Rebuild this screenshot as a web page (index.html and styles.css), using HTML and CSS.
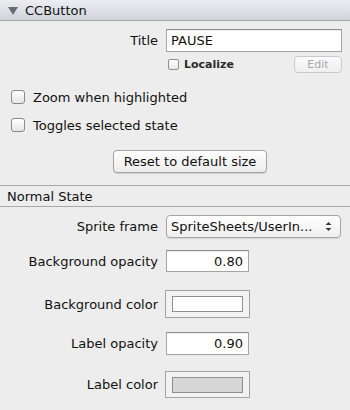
FILE: index.html
```html
<!DOCTYPE html>
<html lang="en">

<head>
  <meta charset="UTF-8" />
  <title>CCButton Inspector</title>
  <link rel="stylesheet" href="styles.css">
</head>

<body>
  <div class="inspector">

    <div class="panel-header">
      <span class="disclosure"></span>
      <span class="panel-title">CCButton</span>
    </div>

    <div class="row title-row">
      <label class="label">Title</label>
      <input class="text-field title-field" type="text" value="PAUSE" />
    </div>

    <div class="row localize-row">
      <span class="small-check"></span>
      <span class="localize-text">Localize</span>
      <button class="edit-button">Edit</button>
    </div>

    <div class="check-row zoom-row">
      <span class="checkbox"></span>
      <span class="check-text">Zoom when highlighted</span>
    </div>

    <div class="check-row toggle-row">
      <span class="checkbox"></span>
      <span class="check-text">Toggles selected state</span>
    </div>

    <button class="reset-button">Reset to default size</button>

    <div class="section-header">Normal State</div>

    <div class="row sprite-row">
      <label class="label">Sprite frame</label>
      <div class="popup">
        <span class="popup-text">SpriteSheets/UserIn...</span>
        <svg class="popup-arrows" width="7" height="11" viewBox="0 0 7 11">
          <path d="M0.5 4 L3.5 1 L6.5 4 Z" fill="#3a3a3a" />
          <path d="M0.5 7 L3.5 10 L6.5 7 Z" fill="#3a3a3a" />
        </svg>
      </div>
    </div>

    <div class="row bg-opacity-row">
      <label class="label">Background opacity</label>
      <input class="text-field number-field" type="text" value="0.80" />
    </div>

    <div class="row bg-color-row">
      <label class="label">Background color</label>
      <div class="color-well">
        <div class="color-swatch swatch-white"></div>
      </div>
    </div>

    <div class="row label-opacity-row">
      <label class="label">Label opacity</label>
      <input class="text-field number-field" type="text" value="0.90" />
    </div>

    <div class="row label-color-row">
      <label class="label">Label color</label>
      <div class="color-well">
        <div class="color-swatch swatch-grey"></div>
      </div>
    </div>

  </div>
</body>

</html>
```

FILE: styles.css
```css
/* Base Reset */
* {
  margin: 0;
  padding: 0;
  box-sizing: border-box;
}

body {
  background-color: #ededed;
  font-family: 'DejaVu Sans', Verdana, sans-serif;
  font-size: 13px;
  color: #111;
}

.inspector {
  width: 350px;
  height: 410px;
  display: flex;
  flex-direction: column;
  overflow: hidden;
}

/* Panel Header */
.panel-header {
  height: 21px;
  display: flex;
  align-items: center;
  background: linear-gradient(#eceef2, #cfd3da);
  border-bottom: 1px solid #a3a6ab;
  padding-left: 8px;
}

.disclosure {
  width: 0;
  height: 0;
  border-left: 5px solid transparent;
  border-right: 5px solid transparent;
  border-top: 8px solid #6b6b6b;
  margin-right: 7px;
  margin-top: 1px;
}

.panel-title {
  font-size: 13px;
  color: #111;
}

/* Generic Rows */
.row {
  display: flex;
  align-items: center;
}

.label {
  width: 166px;
  padding-right: 8px;
  text-align: right;
}

.text-field {
  height: 100%;
  border: 1px solid #a4a4a4;
  border-top-color: #8c8c8c;
  background-color: #fff;
  font-family: inherit;
  font-size: 13px;
  color: #111;
  outline: none;
  padding: 0 4px;
  box-shadow: inset 0 1px 1px rgba(0, 0, 0, 0.08);
}

.title-row {
  margin-top: 8px;
  height: 23px;
}

.title-field {
  width: 176px;
}

/* Localize */
.localize-row {
  margin-top: 4px;
  height: 16px;
  padding-left: 168px;
}

.small-check {
  width: 11px;
  height: 11px;
  border: 1px solid #8f8f8f;
  border-radius: 2px;
  background: linear-gradient(#fff, #e8e8e8);
  margin-right: 5px;
}

.localize-text {
  font-size: 11px;
  font-weight: bold;
  color: #2a2a2a;
}

.edit-button {
  margin-left: auto;
  margin-right: 8px;
  width: 48px;
  height: 17px;
  border: 1px solid #c9c9c9;
  border-radius: 4px;
  background: linear-gradient(#fafafa, #efefef);
  font-family: inherit;
  font-size: 11px;
  color: #a9a9a9;
}

/* Checkboxes */
.check-row {
  display: flex;
  align-items: center;
  height: 20px;
  padding-left: 11px;
}

.zoom-row {
  margin-top: 15px;
}

.toggle-row {
  margin-top: 8px;
}

.checkbox {
  width: 14px;
  height: 14px;
  border: 1px solid #8a8a8a;
  border-radius: 3px;
  background: linear-gradient(#ffffff, #e6e6e6);
  margin-right: 8px;
}

/* Reset Button */
.reset-button {
  margin-top: 15px;
  margin-left: 113px;
  width: 154px;
  height: 23px;
  border: 1px solid #a2a2a2;
  border-radius: 4px;
  background: linear-gradient(#ffffff, #ececec);
  box-shadow: 0 1px 1px rgba(0, 0, 0, 0.12);
  font-family: inherit;
  font-size: 13px;
  color: #111;
}

/* Normal State Section */
.section-header {
  margin-top: 12px;
  height: 22px;
  border-top: 1px solid #a9a9a9;
  border-bottom: 1px solid #a9a9a9;
  display: flex;
  align-items: center;
  padding-left: 7px;
}

.sprite-row {
  margin-top: 8px;
  height: 23px;
}

.popup {
  width: 175px;
  height: 100%;
  display: flex;
  align-items: center;
  justify-content: space-between;
  border: 1px solid #a6a6a6;
  border-radius: 4px;
  background: linear-gradient(#ffffff, #efefef);
  box-shadow: 0 1px 1px rgba(0, 0, 0, 0.1);
  padding: 0 8px 0 4px;
}

.popup-text {
  white-space: nowrap;
}

.bg-opacity-row {
  margin-top: 12px;
  height: 22px;
}

.number-field {
  width: 83px;
  text-align: right;
  padding-right: 5px;
}

.bg-color-row {
  margin-top: 18px;
  height: 28px;
}

.label-opacity-row {
  margin-top: 14px;
  height: 23px;
}

.label-color-row {
  margin-top: 16px;
  height: 27px;
}

/* Color Wells */
.color-well {
  width: 85px;
  height: 100%;
  margin-left: -1px;
  border: 1px solid #a3a3a3;
  background-color: #f2f2f2;
  display: flex;
  align-items: center;
  justify-content: center;
}

.color-swatch {
  width: 71px;
  height: 16px;
  border: 1px solid #8e8e8e;
}

.swatch-white {
  background-color: #fff;
}

.swatch-grey {
  background-color: #d6d6d6;
}
```
